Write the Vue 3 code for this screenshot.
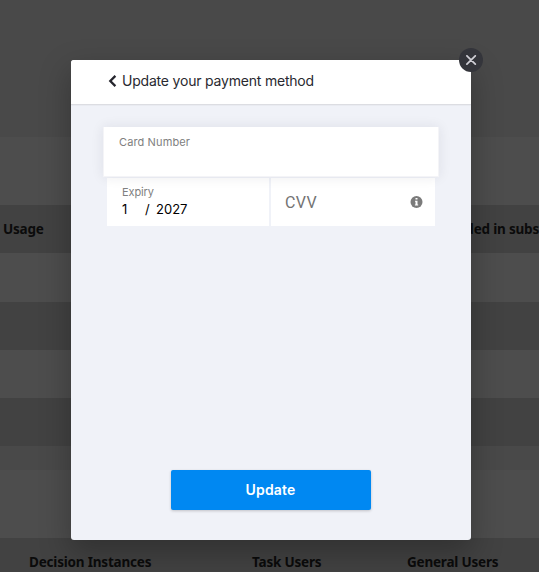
<script setup>
import { ref } from 'vue'
const cardNumber = ref('')
const month = ref('1')
const year = ref('2027')
</script>

<template>
  <main class="page">
    <div class="backdrop">
      <div class="band top"></div>
      <div class="band gap"></div>
      <div class="band row usage"><span>Usage</span><span class="included">Included in subs</span></div>
      <div class="band light first"></div>
      <div class="band row"></div>
      <div class="band light"></div>
      <div class="band row"></div>
      <div class="band between"></div>
      <div class="band gap"></div>
      <div class="band row last"><span class="decision">Decision Instances</span><span class="task">Task Users</span><span class="general">General Users</span></div>
    </div>
    <section class="modal">
      <header>
        <svg class="back" width="9" height="12" viewBox="0 0 9 12"><path d="M7.4.9 2.3 6l5.1 5.1" fill="none" stroke="#25252d" stroke-width="2.3" /></svg>
        <span class="title">Update your payment method</span>
      </header>
      <button class="close" aria-label="Close">
        <svg width="11" height="10" viewBox="0 0 11 10"><path d="m.9.8 8.4 8.4M9.3.8.9 9.2" stroke="#d0cfd6" stroke-width="1.7" stroke-linecap="round" /></svg>
      </button>
      <div class="content">
        <label class="card"><span class="card-label">Card Number</span><span>{{ cardNumber }}</span></label>
        <div class="fields">
          <div class="expiry">
            <span class="expiry-label">Expiry</span>
            <div class="date"><span class="month">{{ month }}</span><span class="slash">/</span><span class="year">{{ year }}</span></div>
          </div>
          <div class="cvv">
            <span class="cvv-label">CVV</span>
            <svg width="13" height="12" viewBox="0 0 13 12"><circle cx="6.5" cy="6" r="6" fill="#7b7b7b" /><path d="M5.5 2h2v1.6h-2zM5 4.7h2.5v3.8h.7v1.1H4.9V8.5h.6V5.8H5z" fill="#fff" /></svg>
          </div>
        </div>
        <button class="update"><span>Update</span></button>
      </div>
    </section>
  </main>
</template>

<style>
body { margin: 0; overflow: hidden; }
</style>
<style scoped>
* { box-sizing: border-box; }
.page { position: relative; width: 539px; height: 572px; overflow: hidden; font-family: Inter, sans-serif; }
.backdrop { height: 572px; overflow: hidden; }
.band { display: flex; align-items: center; height: 48px; padding-bottom: 1px; white-space: nowrap; color: #0b0b0b; font: 700 13.5px "Noto Sans", sans-serif; letter-spacing: -.2px; }
.top { height: 137px; background: #494949; }
.gap { height: 68px; background: #4d4d4d; }
.row { background: #424242; }
.light { background: #4d4d4d; }
.first { height: 49px; }
.between { height: 24px; background: #494949; }
.usage { justify-content: space-between; padding-left: 3px; }
.last { padding-left: 29px; }
.decision { width: 223px; }
.task { width: 155px; }
.modal { position: absolute; left: 71px; top: 60px; width: 400px; height: 480px; background: #f0f2f8; border-radius: 3px; box-shadow: 0 12px 30px 2px rgba(0, 0, 0, .25); }
header { display: flex; align-items: center; height: 45px; padding: 0 0 2px 37px; background: #fff; border-bottom: 1px solid #dcdde2; box-shadow: 0 1px 1px rgba(0, 0, 0, .03); border-radius: 3px 3px 0 0; color: #292930; font-size: 14px; }
.title { margin: 0 0 1px 5px; letter-spacing: -.2px; }
button { border: 0; padding: 0; font-family: inherit; }
.close { position: absolute; right: -12px; top: -12px; width: 24px; height: 24px; border-radius: 50%; background: #34353b; display: flex; align-items: center; justify-content: center; }
.content { height: 435px; padding: 22px 32px 30px; display: flex; flex-direction: column; }
.card { position: relative; z-index: 1; flex: none; height: 50px; width: 336px; padding: 8px 15px; background: #fff; border: 1px solid #f4f4f7; border-top: 0; box-shadow: 0 0 12px rgba(30, 30, 50, .09); font-size: 11px; line-height: 14px; color: #808080; }
.card-label { letter-spacing: .12px; }
.fields { display: flex; gap: 2px; height: 48px; margin: 1px 0 0 4px; }
.expiry { width: 162px; padding: 7px 15px; background: #fff; }
.expiry-label { display: block; font-size: 11px; line-height: 14px; color: #808080; letter-spacing: -.1px; }
.date { display: flex; font-size: 13px; line-height: 20px; color: #000; }
.month { width: 23px; }
.slash { width: 11px; }
.cvv { display: flex; align-items: center; justify-content: space-between; width: 164px; padding: 0 12px 0 14px; background: #fff; color: #737373; }
.cvv-label { font-family: Roboto, sans-serif; font-size: 16px; letter-spacing: .4px; }
.update { width: 200px; height: 40px; margin: auto auto 0 68px; padding: 0 1px 2px 0; border-radius: 2px; background: #0088f2; color: #fff; font-weight: 600; font-size: 14px; letter-spacing: .15px; box-shadow: 0 1px 3px rgba(0, 0, 0, .2); }
</style>
